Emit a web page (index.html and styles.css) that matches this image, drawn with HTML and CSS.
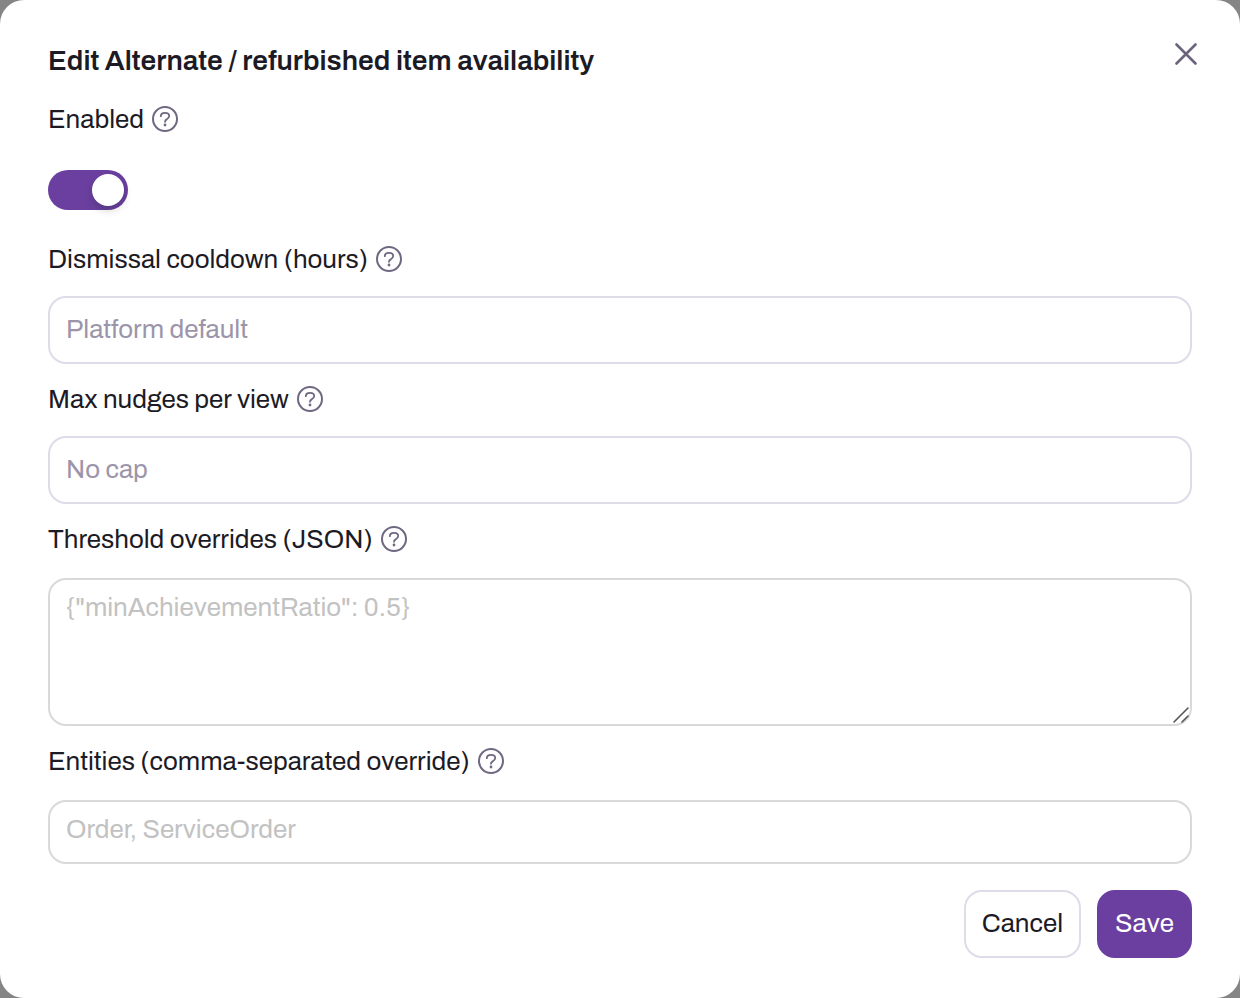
FILE: index.html
```html
<!DOCTYPE html>
<html lang="en">
<head>
<meta charset="utf-8">
<meta name="viewport" content="width=device-width, initial-scale=1">
<title>Edit Alternate / refurbished item availability</title>
<link rel="stylesheet" href="styles.css">
</head>
<body>
<svg class="sprite" aria-hidden="true">
  <symbol id="help" viewBox="0 0 26 26">
    <circle cx="13" cy="13" r="12" stroke-width="2"/>
    <path d="M8.8 10.2C8.8 8 10.6 6.8 13 6.8s4.2 1.3 4.2 3.3c0 1.5-.9 2.2-2.2 3-1.4.8-2 1.3-2 2.7" stroke-width="1.8"/>
    <circle class="dot" cx="13" cy="19" r="1.4"/>
  </symbol>
</svg>
<form class="dialog" role="dialog" aria-labelledby="title">
  <header class="header">
    <h1 class="title" id="title">Edit Alternate / refurbished item availability</h1>
    <button class="close" type="button" aria-label="Close">
      <svg class="close-icon" viewBox="0 0 22 22"><path d="M1.5 1.5l19 19M20.5 1.5l-19 19"/></svg>
    </button>
  </header>
  <div class="field">
    <div class="label-row">
      <label for="enabled">Enabled</label>
      <button class="help" type="button" aria-label="Help: Enabled"><svg><use href="#help"/></svg></button>
    </div>
    <div class="switch-row"><input class="switch" id="enabled" type="checkbox" role="switch" checked></div>
  </div>
  <div class="field">
    <div class="label-row">
      <label for="cooldown">Dismissal cooldown (hours)</label>
      <button class="help" type="button" aria-label="Help: Dismissal cooldown"><svg><use href="#help"/></svg></button>
    </div>
    <input class="control" id="cooldown" type="text" inputmode="numeric" placeholder="Platform default">
  </div>
  <div class="field">
    <div class="label-row">
      <label for="nudges">Max nudges per view</label>
      <button class="help" type="button" aria-label="Help: Max nudges per view"><svg><use href="#help"/></svg></button>
    </div>
    <input class="control" id="nudges" type="text" inputmode="numeric" placeholder="No cap">
  </div>
  <div class="field field-plain">
    <div class="label-row">
      <label for="thresholds">Threshold overrides (JSON)</label>
      <button class="help" type="button" aria-label="Help: Threshold overrides"><svg><use href="#help"/></svg></button>
    </div>
    <div class="textarea-wrap">
      <textarea class="control control-plain textarea" id="thresholds" placeholder="{&quot;minAchievementRatio&quot;: 0.5}"></textarea>
      <svg class="grip" viewBox="0 0 16 16" aria-hidden="true"><path d="M1 15L15 1M9 15l6-6"/></svg>
    </div>
  </div>
  <div class="field field-plain">
    <div class="label-row">
      <label for="entities">Entities (comma-separated override)</label>
      <button class="help" type="button" aria-label="Help: Entities"><svg><use href="#help"/></svg></button>
    </div>
    <input class="control control-plain" id="entities" type="text" placeholder="Order, ServiceOrder">
  </div>
  <footer class="actions">
    <button class="button" type="button">Cancel</button>
    <button class="button button-primary" type="submit">Save</button>
  </footer>
</form>
</body>
</html>
```

FILE: styles.css
```css
* {
  box-sizing: border-box;
}

body {
  margin: 0;
  background: #858585;
  color: #1c1a24;
  font: 26px/38px Archivo, "Liberation Sans", Arial, sans-serif;
}

button,
input,
textarea {
  font: inherit;
  color: inherit;
}

button {
  cursor: pointer;
}

.sprite {
  position: absolute;
  width: 0;
  height: 0;
}

.dialog {
  display: flex;
  flex-direction: column;
  gap: 16px;
  padding: 40px 48px;
  background: #fff;
  border-radius: 24px;
}

.header {
  display: flex;
  align-items: flex-start;
  justify-content: space-between;
  padding-bottom: 2px;
}

.title {
  margin: 0;
  font-size: 28px;
  line-height: 42px;
  font-weight: 600;
}

.close {
  display: flex;
  align-items: center;
  justify-content: center;
  width: 28px;
  height: 28px;
  margin-right: -8px;
  padding: 0;
  border: 0;
  background: none;
}

.close-icon {
  width: 22px;
  height: 22px;
  fill: none;
  stroke: #6b647c;
  stroke-width: 2.6;
  stroke-linecap: round;
}

.field {
  display: flex;
  flex-direction: column;
  gap: 18px;
}

.field-plain {
  gap: 20px;
}

.label-row {
  display: flex;
  align-items: center;
  gap: 8px;
}

.help {
  display: flex;
  padding: 0;
  border: 0;
  background: none;
}

.help svg {
  width: 26px;
  height: 26px;
  fill: none;
  stroke: #6f6880;
  stroke-linecap: round;
}

.dot {
  fill: #6f6880;
  stroke: none;
}

.switch-row {
  display: flex;
  align-items: center;
  height: 68px;
}

.switch {
  appearance: none;
  display: flex;
  width: 80px;
  height: 40px;
  margin: 0;
  padding: 4px;
  border-radius: 20px;
  background: #c9c5d3;
}

.switch::before {
  content: "";
  width: 32px;
  height: 32px;
  border-radius: 50%;
  background: #fff;
  box-shadow: 0 4px 8px rgba(0, 35, 11, 0.2);
}

.switch:checked {
  justify-content: flex-end;
  background: #6b3fa0;
}

.control {
  display: block;
  width: 100%;
  height: 68px;
  padding: 12px 16px 14px;
  border: 2px solid #dfdcea;
  border-radius: 18px;
  background: #fff;
}

.control::placeholder {
  color: #9c95aa;
  opacity: 1;
}

.control-plain {
  height: 64px;
  padding: 8px 16px 14px;
  border-color: #d9d9d9;
}

.control-plain::placeholder {
  color: #c2c2c2;
}

.textarea-wrap {
  position: relative;
}

.textarea {
  height: 148px;
  resize: none;
}

.grip {
  position: absolute;
  right: 3px;
  bottom: 3px;
  width: 16px;
  height: 16px;
  fill: none;
  stroke: #555;
  stroke-width: 1.6;
  stroke-linecap: round;
}

.actions {
  display: flex;
  justify-content: flex-end;
  gap: 16px;
  padding-top: 10px;
}

.button {
  height: 68px;
  padding: 0 16px 2px;
  border: 2px solid #dfdcea;
  border-radius: 18px;
  background: #fff;
}

.button-primary {
  border-color: #6b3fa0;
  background: #6b3fa0;
  color: #fff;
}
```
